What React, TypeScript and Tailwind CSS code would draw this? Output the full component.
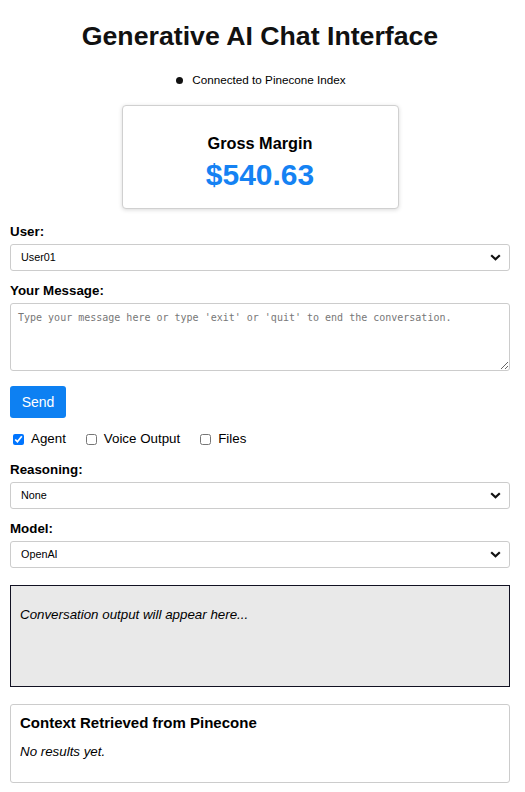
import React, { useState } from 'react';

const labelCls = 'block text-[13.33px] font-bold leading-[15px] text-black mb-[5px]';
const selectCls =
  'w-full h-[27px] appearance-none border border-[#cccccc] rounded-[3px] bg-white pl-[10px] pr-[24px] text-[10.8px] text-black';

const Chevron = () => (
  <svg
    className="pointer-events-none absolute right-[9px] top-[10px]"
    width="11"
    height="7"
    viewBox="0 0 11 7"
    fill="none"
  >
    <path d="M1.2 1.2 L5.5 5.3 L9.8 1.2" stroke="#111" strokeWidth="2.2" />
  </svg>
);

const SelectBox: React.FC<{ value: string; options: string[] }> = ({ value, options }) => (
  <div className="relative">
    <select className={selectCls} defaultValue={value}>
      {options.map((o) => (
        <option key={o}>{o}</option>
      ))}
    </select>
    <Chevron />
  </div>
);

const App: React.FC = () => {
  const [agent, setAgent] = useState(true);
  const [voice, setVoice] = useState(false);
  const [files, setFiles] = useState(false);

  return (
    <div className="min-h-[792px] bg-white pl-[10px] pr-[15px] font-['Liberation_Sans',Arial,sans-serif] text-black">
      {/* Header */}
      <h1 className="pt-[20px] text-center text-[26.7px] font-bold leading-[32px] text-[#111]">
        Generative AI Chat Interface
      </h1>
      <div className="mt-[21px] flex items-center justify-center gap-[9px] pl-[2px] text-[11.7px] leading-[14px]">
        <span className="h-[7px] w-[7px] rounded-full bg-[#111]" />
        <span>Connected to Pinecone Index</span>
      </div>

      {/* Metric card */}
      <div className="mx-auto mt-[18px] flex h-[104px] w-[277px] flex-col items-center rounded-[4px] border border-[#d0d0d0] bg-white shadow-[0_1px_4px_rgba(0,0,0,0.15)]">
        <div className="mt-[27px] text-[16.3px] font-bold leading-[20px]">Gross Margin</div>
        <div className="mt-[4px] text-[30px] font-bold leading-[36px] text-[#1582f3]">$540.63</div>
      </div>

      {/* Form */}
      <div className="mt-[15px]">
        <label className={labelCls}>User:</label>
        <SelectBox value="User01" options={['User01', 'User02']} />
      </div>

      <div className="mt-[12px]">
        <label className={labelCls}>Your Message:</label>
        <textarea
          className="block h-[68px] w-full rounded-[3px] border border-[#cccccc] px-[7px] py-[7px] font-['DejaVu_Sans_Mono',monospace] text-[10px] leading-[14px] placeholder:text-[#777]"
          placeholder="Type your message here or type 'exit' or 'quit' to end the conversation."
        />
      </div>

      <button className="mt-[15px] h-[32px] w-[56px] rounded-[3px] bg-[#0d80f2] text-[14px] text-white">
        Send
      </button>

      <div className="mt-[13px] flex items-center gap-[20px] pl-[3px] text-[13.33px] leading-[16px]">
        <label className="flex items-center gap-[7px]">
          <input type="checkbox" checked={agent} onChange={() => setAgent(!agent)} className="h-[11px] w-[11px]" />
          Agent
        </label>
        <label className="flex items-center gap-[7px]">
          <input type="checkbox" checked={voice} onChange={() => setVoice(!voice)} className="h-[11px] w-[11px]" />
          Voice Output
        </label>
        <label className="flex items-center gap-[7px]">
          <input type="checkbox" checked={files} onChange={() => setFiles(!files)} className="h-[11px] w-[11px]" />
          Files
        </label>
      </div>

      <div className="mt-[15px]">
        <label className={labelCls}>Reasoning:</label>
        <SelectBox value="None" options={['None', 'Low', 'High']} />
      </div>

      <div className="mt-[12px]">
        <label className={labelCls}>Model:</label>
        <SelectBox value="OpenAI" options={['OpenAI', 'Anthropic']} />
      </div>

      {/* Output */}
      <div className="mt-[17px] h-[102px] border border-[#111122] bg-[#e9e9e9] px-[9px] pt-[21px] text-[13.33px] italic leading-[16px]">
        Conversation output will appear here...
      </div>

      {/* Context */}
      <div className="mt-[17px] h-[79px] rounded-[3px] border border-[#cccccc] px-[9px] pt-[9px]">
        <h3 className="text-[15px] font-bold leading-[18px]">Context Retrieved from Pinecone</h3>
        <p className="mt-[12px] text-[13.33px] italic leading-[16px]">No results yet.</p>
      </div>
    </div>
  );
};

export default App;
